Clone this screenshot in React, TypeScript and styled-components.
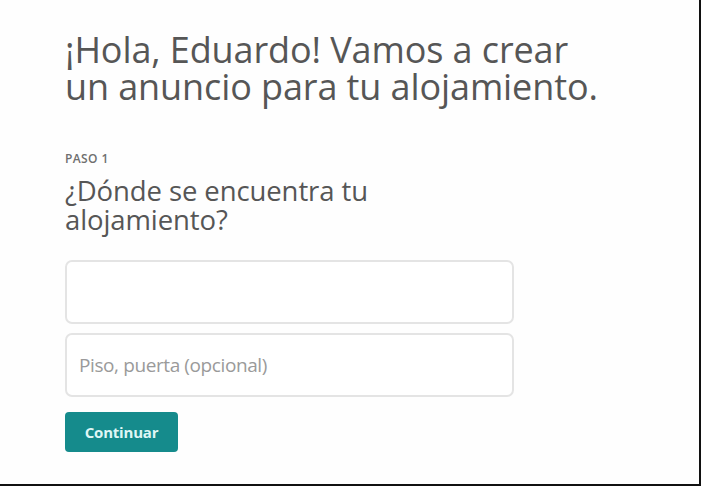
import React from "react";
import styled, { createGlobalStyle } from "styled-components";

const GlobalStyle = createGlobalStyle`
	html, body {
		margin: 0;
		padding: 0;
		background: #fff;
	}
	body {
		font-family: "Open Sans", "Noto Sans", sans-serif;
	}
`;

export default function App() {
	return (
		<>
			<GlobalStyle />
			<Frame>
				<Content>
					<Title>
						¡Hola, Eduardo! Vamos a crear
						<br />
						un anuncio para tu alojamiento.
					</Title>
					<StepLabel>PASO 1</StepLabel>
					<Question>¿Dónde se encuentra tu alojamiento?</Question>
					<Fields>
						<Field type="text" />
						<Field type="text" placeholder="Piso, puerta (opcional)" />
					</Fields>
					<ContinueButton type="button">Continuar</ContinueButton>
				</Content>
			</Frame>
		</>
	);
}

const Frame = styled.div`
	box-sizing: border-box;
	width: 701px;
	height: 486px;
	border-right: 2px solid #111;
	border-bottom: 2px solid #111;
	background: #fefefe;
	overflow: hidden;
`;

const Content = styled.div`
	width: 600px;
	padding: 31px 0 0 65px;
	display: flex;
	flex-direction: column;
`;

const Title = styled.h1`
	margin: 0;
	font-size: 36px;
	font-weight: 400;
	line-height: 37px;
	color: #565656;
	letter-spacing: -0.1px;
	white-space: nowrap;
`;

const StepLabel = styled.div`
	margin-top: 46px;
	font-size: 12px;
	line-height: 16px;
	font-weight: 600;
	color: #6f6f6f;
	letter-spacing: 0.4px;
`;

const Question = styled.h2`
	margin: 9px 0 0;
	width: 340px;
	font-size: 27.5px;
	font-weight: 400;
	line-height: 29px;
	color: #565656;
	letter-spacing: -0.1px;
`;

const Fields = styled.div`
	margin-top: 26px;
	display: flex;
	flex-direction: column;
	gap: 9px;
	width: 449px;
`;

const Field = styled.input`
	box-sizing: border-box;
	height: 64px;
	border: 2px solid #e4e4e4;
	border-radius: 7px;
	padding: 0 12px;
	font-family: "Open Sans", "Noto Sans", sans-serif;
	font-size: 19px;
	letter-spacing: -0.4px;
	color: #555;
	background: #fff;
	outline: none;

	&::placeholder {
		color: #9a9a9a;
	}
`;

const ContinueButton = styled.button`
	margin-top: 15px;
	align-self: flex-start;
	width: 113px;
	height: 40px;
	border: none;
	border-radius: 4px;
	background: #158b8c;
	color: #dff6f5;
	font-family: "Open Sans", "Noto Sans", sans-serif;
	font-size: 15px;
	font-weight: 700;
	letter-spacing: -0.2px;
	cursor: pointer;
`;
